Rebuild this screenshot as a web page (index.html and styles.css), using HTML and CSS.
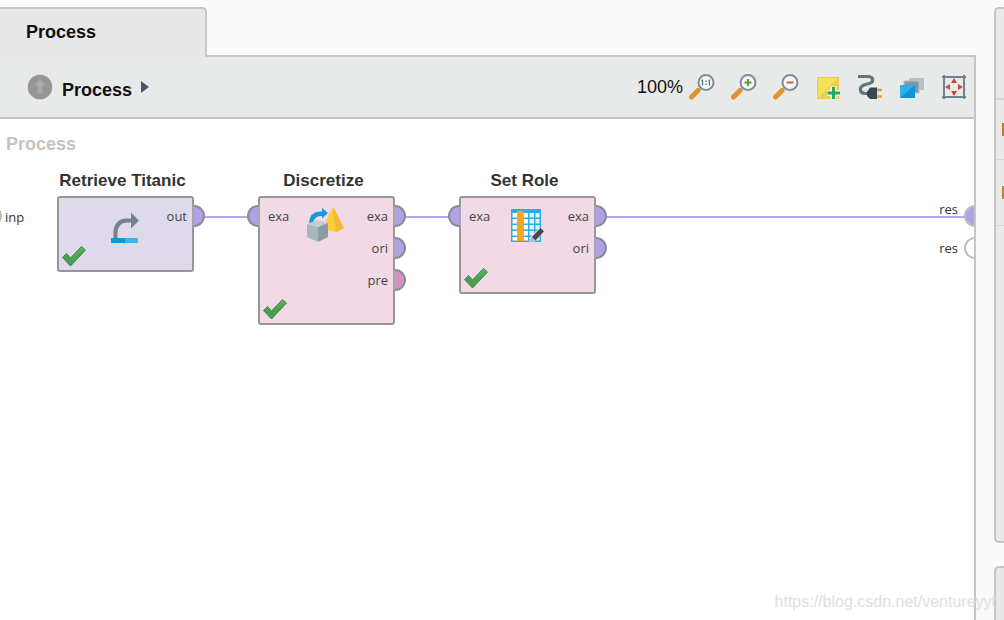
FILE: index.html
```
<!DOCTYPE html>
<html lang="en">
<head>
<meta charset="utf-8">
<title>Process</title>
<link rel="stylesheet" href="styles.css">
</head>
<body>
<svg class="defs" width="0" height="0" aria-hidden="true">
  <defs>
    <linearGradient id="leaf" x1="0" y1="0" x2="0" y2="1"><stop offset="0" stop-color="#5fb868"/><stop offset="1" stop-color="#3a9045"/></linearGradient>
    <symbol id="check" viewBox="0 0 26 22"><path d="M1.500 12.500 5.500 8.500 9.500 13 20.500 1.500 24.500 5 9.500 21Z" fill="url(#leaf)" stroke="#3b8a45" stroke-width="1"/><path d="M3 12.500 9.500 18.500 22.500 4.500" fill="none" stroke="#4aa455" stroke-width="1.500"/></symbol>
    <symbol id="lens" viewBox="0 0 26 26"><path d="M11 15 8 18" stroke="#7d8f98" stroke-width="2"/><path d="M9 16.500 2.500 23" stroke="#e3922a" stroke-width="5" stroke-linecap="round"/><circle cx="17" cy="8.500" r="7.500" fill="#f4f6f7" stroke="#7a8f99" stroke-width="2"/></symbol>
  </defs>
</svg>
<div class="workspace">
  <main class="panel">
    <div class="tabs"><h1 class="tab">Process</h1><span class="tab-rest"></span></div>
    <div class="body">
      <div class="toolbar">
        <nav class="crumbs">
          <button class="icon-button up" aria-label="Up one level"><svg width="26" height="26" viewBox="0 0 26 26"><circle cx="13" cy="13" r="12.300" fill="#969696"/><path d="M13 5 19 11.500H15.500V20H10.500V11.500H7Z" fill="#a9a9a9"/></svg></button>
          <a class="crumb" href="#process">Process</a>
          <svg width="8" height="14" viewBox="0 0 8 14"><path d="M0 1 8 7 0 13Z" fill="#4c5663"/></svg>
        </nav>
        <div class="tools">
          <span class="zoom">100%</span>
          <button class="icon-button" aria-label="Actual size"><svg width="26" height="26"><use href="#lens"/><path d="M13.500 5.500V11.500M20.500 5.500V11.500M12.500 6.500H13.500M19.500 6.500H20.500M17 6.500V8M17 9.500V11" stroke="#66727a" stroke-width="1.300"/></svg></button>
          <button class="icon-button" aria-label="Zoom in"><svg width="26" height="26"><use href="#lens"/><path d="M17 5V12M13.500 8.500H20.500" stroke="#57a02d" stroke-width="2"/></svg></button>
          <button class="icon-button" aria-label="Zoom out"><svg width="26" height="26"><use href="#lens"/><path d="M13.500 8.500H20.500" stroke="#e0583f" stroke-width="2"/></svg></button>
          <button class="icon-button" aria-label="Add note"><svg width="26" height="26" viewBox="0 0 26 26"><path d="M2 3H24V25H2Z" fill="#f8e05a"/><path d="M24 3V25H2Z" fill="#efd04a"/><path d="M2.500 3.500H23.500V24.500H2.500Z" fill="none" stroke="#e6cd50"/><path d="M18.500 12.500V25.500M12 19H25" stroke="#f3f3ea" stroke-width="6"/><path d="M18.500 13V25M12.500 19H25" stroke="#22ad5c" stroke-width="3"/></svg></button>
          <button class="icon-button" aria-label="Connect"><svg width="26" height="26" viewBox="0 0 26 26"><path d="M1 2.500H11C17 2.500 17 8.500 12 9.500L7 11C2 13 2 19 8 19.500H12" fill="none" stroke="#63747e" stroke-width="3.200"/><path d="M10 18 13 13.500H20V25H13L10 22Z" fill="#3b4850"/><path d="M20 16H25M20 22.500H25" stroke="#e6a13a" stroke-width="2.500"/></svg></button>
          <button class="icon-button" aria-label="Order operators"><svg width="26" height="26" viewBox="0 0 26 26"><path d="M10 4H25V16H10Z" fill="#b5c1c6"/><path d="M5 7H20V19H5Z" fill="#8297a1" stroke="#b4c0c5"/><path d="M1 11H16V24H1Z" fill="#31aee9"/><path d="M16 11V24H1Z" fill="#1292da"/></svg></button>
          <button class="icon-button" aria-label="Fit canvas"><svg width="26" height="26" viewBox="0 0 26 26"><path d="M3 1V25M23 1V25M1 3H25M1 23H25" stroke="#6d838e" stroke-width="2"/><path d="M13 4 16 9H10ZM13 22 10 17H16ZM4 13 9 10V16ZM22 13 17 10V16Z" fill="#cf482c"/></svg></button>
        </div>
      </div>
      <section class="canvas">
        <h2 class="canvas-title">Process</h2>
        <span class="wire wire-a"></span><span class="wire wire-b"></span><span class="wire wire-c"></span>
        <span class="edge-port edge-inp"></span><span class="port-label label-inp">inp</span>
        <span class="port-label label-res1">res</span><span class="edge-port edge-res1"></span>
        <span class="port-label label-res2">res</span><span class="edge-port edge-res2"></span>

        <article class="node node-retrieve">
          <h3 class="node-title">Retrieve Titanic</h3>
          <div class="box">
            <ul class="ports ins"></ul>
            <svg class="glyph" width="36" height="36" viewBox="0 0 36 36"><path d="M9.500 30V25Q9.500 13 21 12.500H26" fill="none" stroke="#71858e" stroke-width="4"/><path d="M25 4.500 33 12.500 25 20.500Z" fill="#71858e"/><path d="M5 30H19V35H5Z" fill="#1594dc"/><path d="M19 30H32V35H19Z" fill="#39b5ef"/></svg>
            <ul class="ports outs"><li class="port">out</li></ul>
            <svg class="check" width="26" height="22"><use href="#check"/></svg>
          </div>
        </article>

        <article class="node node-discretize">
          <h3 class="node-title">Discretize</h3>
          <div class="box">
            <ul class="ports ins"><li class="port">exa</li></ul>
            <svg class="glyph" width="36" height="36" viewBox="0 0 36 36"><path d="M2 15Q3 4 12 3.500H15V0L21 5 15 10.500V8Q8 7 6 15Z" fill="#159adf"/><path d="M26 -1 37 20 29 24 15 21Z" fill="#fbcf3b"/><path d="M26 -1 37 20 29 24Z" fill="#f4b92e"/><path d="M0 16 10 12 21 15 11 19Z" fill="#c2ced2"/><path d="M0 16 11 19V34L0 29Z" fill="#a9b6bb"/><path d="M11 19 21 15V29L11 34Z" fill="#8b9ca4"/></svg>
            <ul class="ports outs"><li class="port">exa</li><li class="port">ori</li><li class="port model">pre</li></ul>
            <svg class="check" width="26" height="22"><use href="#check"/></svg>
          </div>
        </article>

        <article class="node node-role">
          <h3 class="node-title">Set Role</h3>
          <div class="box">
            <ul class="ports ins"><li class="port">exa</li></ul>
            <svg class="glyph" width="36" height="36" viewBox="0 0 36 36"><path d="M3 1H33V34H3Z" fill="#2badea"/><path d="M4.500 5h4.500v4.500h-4.500zM4.500 11h4.500v4.500h-4.500zM4.500 17h4.500v4.500h-4.500zM4.500 23h4.500v4.500h-4.500zM4.500 29h4.500v3.500h-4.500zM15.500 5h4.500v4.500h-4.500zM15.500 11h4.500v4.500h-4.500zM15.500 17h4.500v4.500h-4.500zM15.500 23h4.500v4.500h-4.500zM15.500 29h4.500v3.500h-4.500z" fill="#fff"/><path d="M21.500 5h4.500v4.500h-4.500zM21.500 11h4.500v4.500h-4.500zM21.500 17h4.500v4.500h-4.500zM21.500 23h4.500v4.500h-4.500zM21.500 29h4.500v3.500h-4.500zM27.500 5h4v4.500h-4zM27.500 11h4v4.500h-4zM27.500 17h4v4.500h-4zM27.500 23h4v4.500h-4zM27.500 29h4v3.500h-4z" fill="#e3f4fc"/><path d="M9 3H15.500V33H9Z" fill="#f9a61b"/><path d="M20 36 22.500 29 32 19.500 36.500 23.500 27 33Z" fill="#f1d9e6"/><path d="M21 35 23.500 29 27 32.500Z" fill="#bfb7ad"/><path d="M24 29 32.500 20 36 23.500 27.500 32.500Z" fill="#50454d"/></svg>
            <ul class="ports outs"><li class="port">exa</li><li class="port">ori</li></ul>
            <svg class="check" width="26" height="22"><use href="#check"/></svg>
          </div>
        </article>
      </section>
    </div>
  </main>
  <aside class="side">
    <section class="side-panel side-top"><div class="side-head"></div><div class="side-row"><span class="mark"></span></div><div class="side-row"><span class="mark"></span></div></section>
    <section class="side-panel side-bottom"></section>
  </aside>
</div>
<div class="watermark">https://blog.csdn.net/ventureyyt</div>
</body>
</html>
```
FILE: styles.css
```
*, *::before, *::after { box-sizing: border-box; }
body { margin: 0; background: #fafafa; color: #111; font: 14px "Open Sans", sans-serif; overflow: hidden; }
h1, h2, h3, ul { margin: 0; padding: 0; list-style: none; }
svg { display: block; overflow: visible; }
.defs { position: absolute; }
.workspace { display: flex; gap: 18px; height: 100vh; padding-top: 7px; }
.panel { flex: 1; min-width: 0; display: flex; flex-direction: column; }
.tabs { display: flex; height: 50px; }
.tab { width: 207px; padding: 11px 26px; font: bold 18px/24px "Liberation Sans", sans-serif; background: #e8e8e8; border: 2px solid #c6c6c6; border-width: 2px 2px 0 0; border-top-right-radius: 5px; }
.tab-rest { flex: 1; border-bottom: 2px solid #c6c6c6; }
.body { flex: 1; display: flex; flex-direction: column; min-height: 0; border-right: 2px solid #c6c6c6; }
.toolbar { display: flex; justify-content: space-between; align-items: center; height: 62px; padding: 0 7px 0 27px; background: #e8eae9; border-bottom: 2px solid #c2c4c3; }
.crumbs, .tools { display: flex; align-items: center; }
.crumbs { gap: 9px; }
.crumb { color: #111; text-decoration: none; font: bold 18px/24px "Liberation Sans", sans-serif; padding-top: 6px; }
.tools { gap: 16px; }
.zoom { font: 18px/24px "Liberation Sans", sans-serif; margin-right: -10px; }
.icon-button { padding: 0; border: 0; background: none; }
.canvas { position: relative; flex: 1; background: #fff; overflow: hidden; }
.canvas-title { padding: 13px 6px; font: bold 18px/24px "Liberation Sans", sans-serif; color: #c4c4c4; }
.node { position: absolute; top: 50px; width: 137px; }
.node-retrieve { left: 57px; }
.node-discretize { left: 258px; }
.node-role { left: 459px; }
.node-title { padding-bottom: 3px; margin: 0 0 0 -6px; font: bold 17px/24px "Liberation Sans", sans-serif; color: #333; text-align: center; white-space: nowrap; }
.box { position: relative; display: flex; justify-content: space-between; padding-top: 7px; border: 2px solid #98959b; border-radius: 3px; background: #f1d9e6; }
.node-retrieve .box { height: 76px; background: #dedaeb; }
.node-discretize .box { height: 129px; }
.node-role .box { height: 98px; }
.glyph { position: absolute; left: 47px; top: 10px; }
.check { position: absolute; left: 2px; bottom: 3px; }
.ports { display: flex; flex-direction: column; gap: 10px; }
.port { display: flex; align-items: center; height: 22px; line-height: 22px; font-size: 13px; color: #444; }
.port::before, .port::after { width: 13px; height: 22px; border: 2px solid #8e8a98; background: #b1a2e6; }
.ins .port::before { content: ""; margin-left: -13px; border-radius: 11px 0 0 11px; border-right-color: #aaa4b2; }
.ins .port { gap: 8px; }
.outs .port::after { content: ""; margin-right: -13px; border-radius: 0 11px 11px 0; border-left-color: #aaa4b2; }
.outs .port { justify-content: flex-end; gap: 5px; }
.outs .model::after { background: #d792be; }
.wire { position: absolute; top: 97px; height: 2px; background: #b5a6ec; }
.wire-a { left: 203px; width: 46px; }
.wire-b { left: 404px; width: 46px; }
.wire-c { left: 605px; right: 8px; }
.port-label { position: absolute; font-size: 13px; line-height: 22px; color: #333; }
.label-inp { left: 5px; top: 87px; }
.label-res1 { right: 16px; top: 79px; }
.label-res2 { right: 16px; top: 118px; }
.edge-port { position: absolute; width: 22px; height: 22px; border: 2px solid #bdbdbd; border-radius: 11px; background: #fff; }
.edge-inp { left: -20px; top: 86px; }
.edge-res1 { right: -12px; top: 86px; background: #b1a2e6; }
.edge-res2 { right: -12px; top: 118px; }
.side { width: 10px; display: flex; flex-direction: column; gap: 23px; }
.side-panel { border: 2px solid #c4c4c4; border-right: 0; background: #e8eae9; }
.side-top { flex: 1; border-radius: 5px 0 0 5px; }
.side-bottom { height: 54px; border-bottom: 0; border-top-left-radius: 5px; background: #e8e8e8; }
.side-head { height: 91px; border-bottom: 2px solid #d4d6d5; }
.side-row { display: flex; justify-content: flex-end; align-items: center; height: 60px; border-bottom: 1px solid #d5d7d6; }
.side-row + .side-row { height: 66px; }
.mark { width: 2px; height: 13px; background: #b88432; }
.watermark { position: absolute; right: 8px; bottom: 7px; font: 16px/22px "Liberation Sans", sans-serif; color: #e0e0e0; }
```
